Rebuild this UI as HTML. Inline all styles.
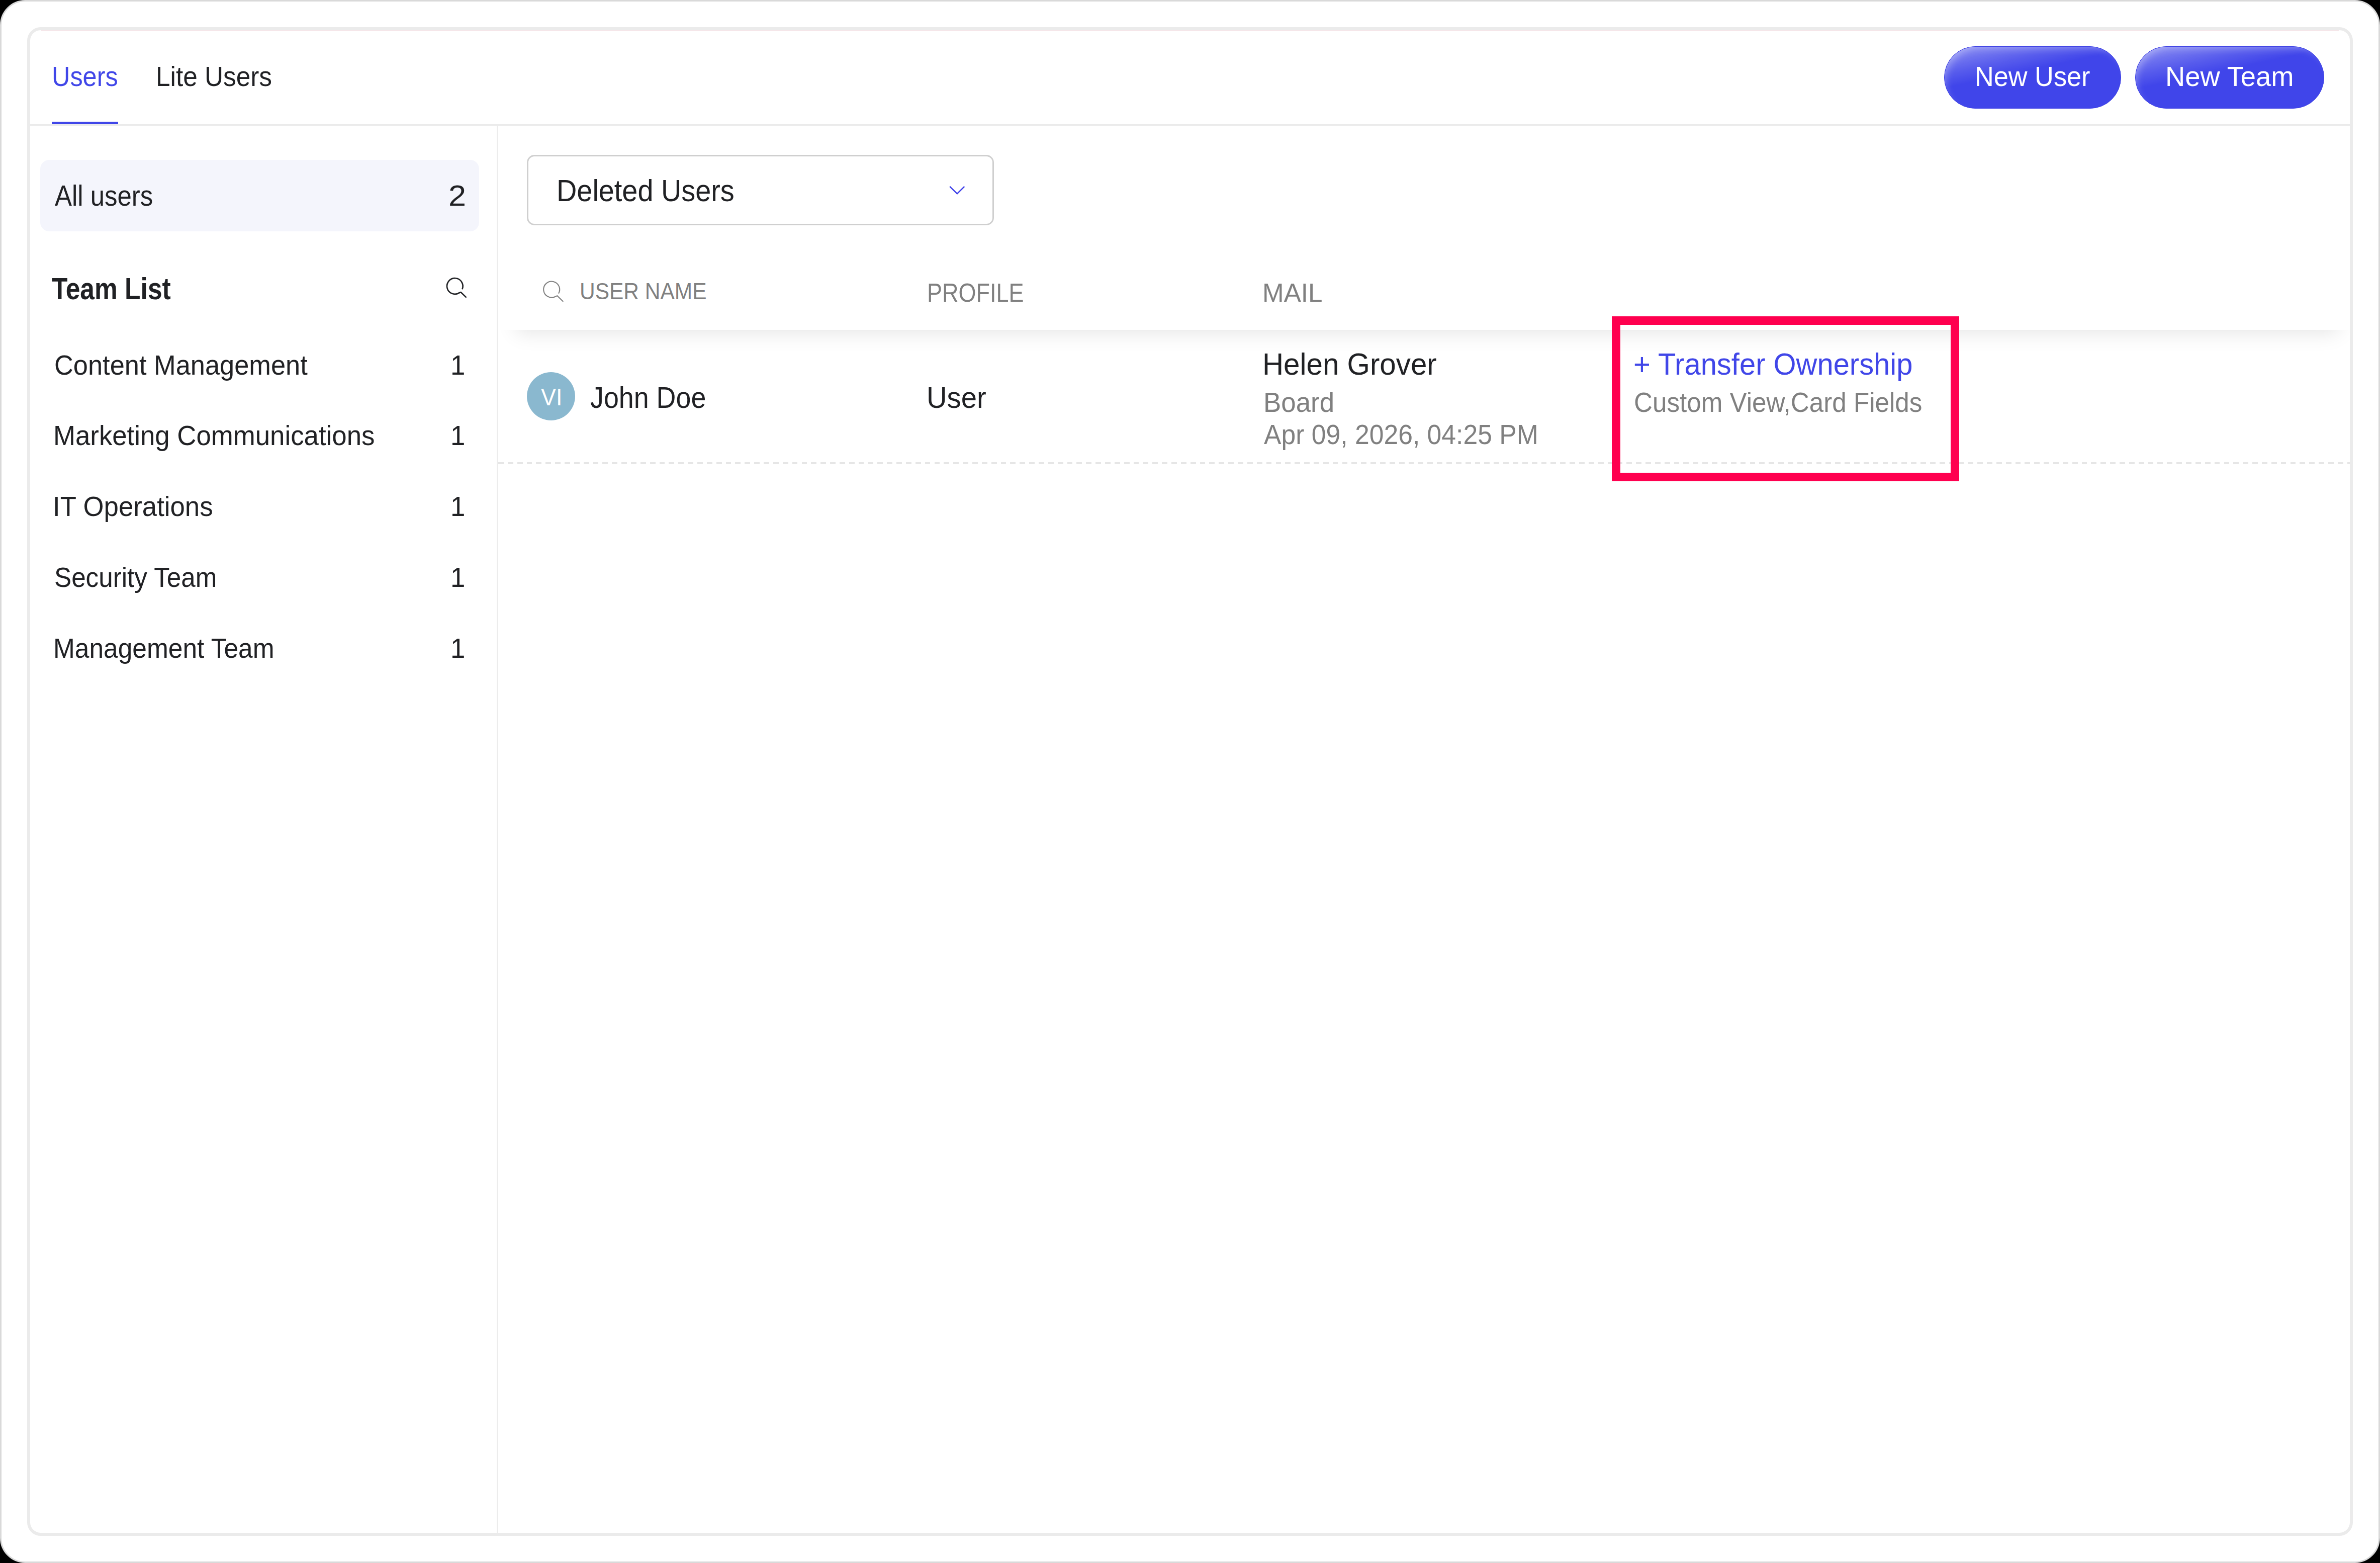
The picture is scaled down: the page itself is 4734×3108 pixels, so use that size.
<!DOCTYPE html>
<html><head><meta charset="utf-8"><title>Users</title><style>
*{margin:0;padding:0;box-sizing:border-box}
html,body{width:4734px;height:3108px;overflow:hidden;background:#000}
body{position:relative;font-family:"Liberation Sans",sans-serif}
.a{position:absolute}
.tx{position:absolute;white-space:nowrap;line-height:1;transform-origin:0 0}
#frame{left:0;top:0;width:4734px;height:3108px;border:3px solid #d9d9d9;border-radius:50px;background:#fff}
#panel{left:54px;top:54px;width:4626px;height:3000px;border:6px solid #ebebeb;border-radius:27px;background:#fff}
#hsep{left:60px;top:247px;width:4614px;height:3px;background:#ebebeb}
#uline{left:103px;top:242px;width:132px;height:5px;background:#4046e8;border-radius:1px}
#vsep{left:988px;top:250px;width:3px;height:2798px;background:#ececec}
#allbox{left:80px;top:318px;width:873px;height:142px;border-radius:18px;background:#f4f5fc}
.btn{top:91.5px;height:124.5px;border-radius:62px;background:linear-gradient(168deg,rgba(255,255,255,0.42) 0%,rgba(255,255,255,0.12) 28%,rgba(255,255,255,0) 42%),#4045ea;border:1.5px solid #3c3fe4;box-shadow:inset 8px 10px 16px -8px rgba(255,255,255,0.35)}
#bnu{left:3867px;width:352px}
#bnt{left:4247px;width:376px}
#dd{left:1048px;top:308px;width:929px;height:140px;border:3px solid #cfcfcf;border-radius:15px}
#shwrap{left:991px;top:656px;width:3683px;height:120px;overflow:hidden}
#shbox{left:36px;top:-200px;width:3625px;height:200px;background:#fff;box-shadow:0 6px 38px rgba(0,0,0,0.105)}
#dash{left:991px;top:919px;width:3683px;height:4px;background:repeating-linear-gradient(90deg,#e6e6e6 0 10.8px,transparent 10.8px 18.86px)}
#avatar{left:1048px;top:740px;width:96px;height:96px;border-radius:50%;background:#8ab8cf}
#redbox{left:3206px;top:629px;width:691px;height:328px;border:17px solid #ff004f}
</style></head>
<body>
<div id="frame" class="a"></div>
<div id="panel" class="a"></div>
<div id="hsep" class="a"></div>
<div class="a" style="left:81px;top:60px;width:4572px;height:1px;background:#f3e2e5"></div>
<div id="uline" class="a"></div>
<div id="vsep" class="a"></div>
<div id="allbox" class="a"></div>
<div id="bnu" class="a btn"></div>
<div id="bnt" class="a btn"></div>
<div id="dd" class="a"></div>
<svg class="a" style="left:1870px;top:350px" width="70" height="60" viewBox="0 0 70 60"><path d="M19.2 20.9 L33.8 35.1 L48.3 20.9" fill="none" stroke="#3d3fe8" stroke-width="2.6"/></svg>
<div id="shwrap" class="a"><div id="shbox" class="a"></div></div>
<svg class="a" style="left:1065px;top:545px" width="70" height="65" viewBox="0 0 70 65"><path d="M46 38.6 A16 16 0 1 0 38.6 45.2 L43.2 43.1 L55.3 54.8" fill="none" stroke="#808080" stroke-width="2.1" stroke-linejoin="round"/></svg>
<svg class="a" style="left:870px;top:540px" width="80" height="70" viewBox="0 0 80 70"><path d="M49.3 35.3 A15.8 15.8 0 1 0 43 42.5 L46.6 41 L57.6 51.6" fill="none" stroke="#202124" stroke-width="2.7" stroke-linejoin="round"/></svg>
<div id="dash" class="a"></div>
<div id="avatar" class="a"></div>
<div class="tx" style="left:103.11px;top:125.73px;font-size:54.65px;color:#4046e8;font-weight:400;transform:scaleX(0.9224)">Users</div>
<div class="tx" style="left:310.24px;top:125.73px;font-size:54.65px;color:#202124;font-weight:400;transform:scaleX(0.9392)">Lite Users</div>
<div class="tx" style="left:3927.67px;top:126.03px;font-size:54.65px;color:#ffffff;font-weight:400;transform:scaleX(0.9569)">New User</div>
<div class="tx" style="left:4307.03px;top:126.03px;font-size:54.65px;color:#ffffff;font-weight:400;transform:scaleX(0.9937)">New Team</div>
<div class="tx" style="left:109.00px;top:362.21px;font-size:56.69px;color:#202124;font-weight:400;transform:scaleX(0.8983)">All users</div>
<div class="tx" style="left:891.78px;top:362.21px;font-size:56.69px;color:#202124;font-weight:400;transform:scaleX(1.1111)">2</div>
<div class="tx" style="left:103.40px;top:542.57px;font-size:61.92px;color:#202124;font-weight:700;transform:scaleX(0.8324)">Team List</div>
<div class="tx" style="left:108.10px;top:699.24px;font-size:55.23px;color:#202124;font-weight:400;transform:scaleX(0.9487)">Content Management</div>
<div class="tx" style="left:106.18px;top:838.74px;font-size:55.23px;color:#202124;font-weight:400;transform:scaleX(0.9557)">Marketing Communications</div>
<div class="tx" style="left:105.22px;top:979.74px;font-size:55.23px;color:#202124;font-weight:400;transform:scaleX(0.9551)">IT Operations</div>
<div class="tx" style="left:108.15px;top:1120.74px;font-size:55.23px;color:#202124;font-weight:400;transform:scaleX(0.9271)">Security Team</div>
<div class="tx" style="left:106.27px;top:1261.74px;font-size:55.23px;color:#202124;font-weight:400;transform:scaleX(0.9320)">Management Team</div>
<div class="tx" style="left:895.68px;top:699.24px;font-size:55.23px;color:#202124;font-weight:400;transform:scaleX(0.9560)">1</div>
<div class="tx" style="left:895.68px;top:838.74px;font-size:55.23px;color:#202124;font-weight:400;transform:scaleX(0.9560)">1</div>
<div class="tx" style="left:895.68px;top:979.74px;font-size:55.23px;color:#202124;font-weight:400;transform:scaleX(0.9560)">1</div>
<div class="tx" style="left:895.68px;top:1120.74px;font-size:55.23px;color:#202124;font-weight:400;transform:scaleX(0.9560)">1</div>
<div class="tx" style="left:895.68px;top:1261.74px;font-size:55.23px;color:#202124;font-weight:400;transform:scaleX(0.9560)">1</div>
<div class="tx" style="left:1107.30px;top:348.93px;font-size:60.32px;color:#202124;font-weight:400;transform:scaleX(0.9258)">Deleted Users</div>
<div class="tx" style="left:1152.78px;top:556.05px;font-size:46.95px;color:#808080;font-weight:400;transform:scaleX(0.9052)">USER NAME</div>
<div class="tx" style="left:1844.49px;top:556.56px;font-size:51.31px;color:#808080;font-weight:400;transform:scaleX(0.8774)">PROFILE</div>
<div class="tx" style="left:2511.41px;top:556.56px;font-size:51.31px;color:#808080;font-weight:400;transform:scaleX(0.9983)">MAIL</div>
<div class="tx" style="left:1174.20px;top:761.78px;font-size:58.72px;color:#202124;font-weight:400;transform:scaleX(0.9163)">John Doe</div>
<div class="tx" style="left:1842.77px;top:761.78px;font-size:58.72px;color:#202124;font-weight:400;transform:scaleX(0.9580)">User</div>
<div class="tx" style="left:2511.29px;top:693.17px;font-size:61.92px;color:#202124;font-weight:400;transform:scaleX(0.9420)">Helen Grover</div>
<div class="tx" style="left:2513.13px;top:773.73px;font-size:54.65px;color:#808080;font-weight:400;transform:scaleX(0.9681)">Board</div>
<div class="tx" style="left:2514.00px;top:837.24px;font-size:55.23px;color:#808080;font-weight:400;transform:scaleX(0.9357)">Apr 09, 2026, 04:25 PM</div>
<div class="tx" style="left:3249.19px;top:693.47px;font-size:61.92px;color:#4046e8;font-weight:400;transform:scaleX(0.9358)">+ Transfer Ownership</div>
<div class="tx" style="left:3250.15px;top:772.54px;font-size:55.23px;color:#808080;font-weight:400;transform:scaleX(0.9264)">Custom View,Card Fields</div>
<div class="tx" style="left:1075.70px;top:765.44px;font-size:48.26px;color:#ffffff;font-weight:400;transform:scaleX(0.9300)">VI</div>
<div id="redbox" class="a"></div>
</body></html>
